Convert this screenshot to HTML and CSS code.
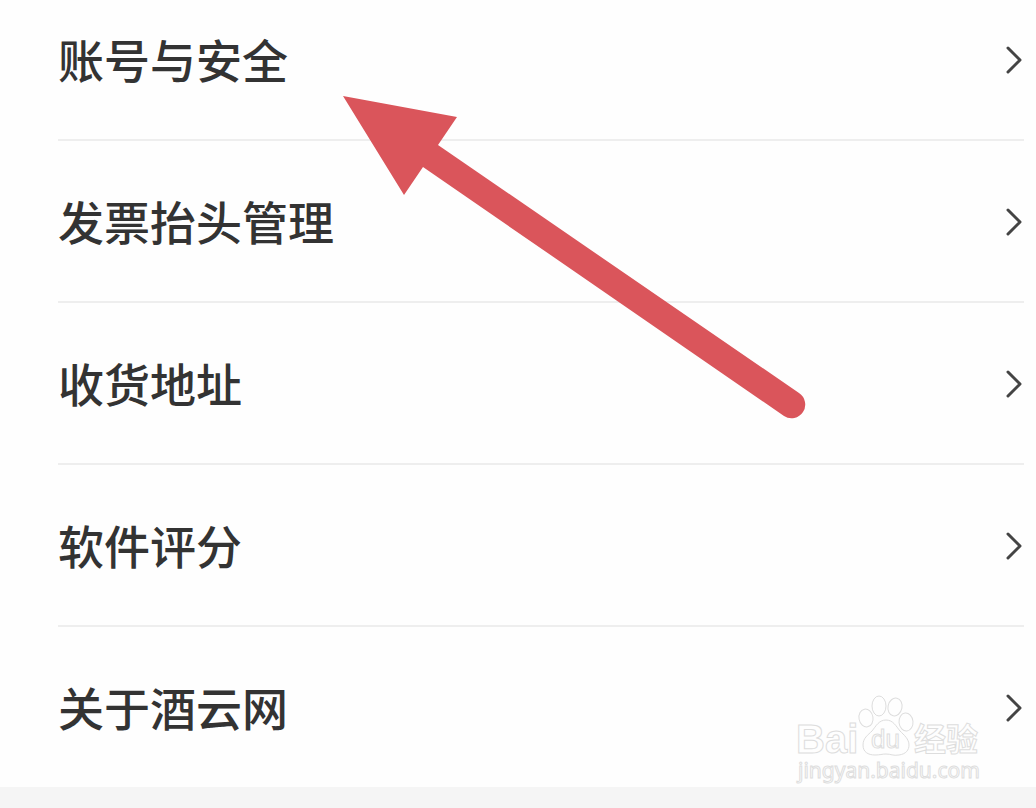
FILE: index.html
```html
<!DOCTYPE html>
<html lang="zh-CN">

<head>
  <meta charset="UTF-8">
  <meta name="viewport" content="width=device-width, initial-scale=1.0">
  <title>设置</title>
  <link rel="stylesheet" href="styles.css">
</head>

<body>
  <main class="page">
    <!-- Settings list -->
    <ul class="settings">
      <li>
        <a class="row" href="#">
          <span class="label">账号与安全</span>
          <svg class="chevron" viewBox="0 0 18 28" aria-hidden="true"><path d="M2 2L14 14L2 26"/></svg>
        </a>
      </li>
      <li>
        <a class="row" href="#">
          <span class="label">发票抬头管理</span>
          <svg class="chevron" viewBox="0 0 18 28" aria-hidden="true"><path d="M2 2L14 14L2 26"/></svg>
        </a>
      </li>
      <li>
        <a class="row" href="#">
          <span class="label">收货地址</span>
          <svg class="chevron" viewBox="0 0 18 28" aria-hidden="true"><path d="M2 2L14 14L2 26"/></svg>
        </a>
      </li>
      <li>
        <a class="row" href="#">
          <span class="label">软件评分</span>
          <svg class="chevron" viewBox="0 0 18 28" aria-hidden="true"><path d="M2 2L14 14L2 26"/></svg>
        </a>
      </li>
      <li>
        <a class="row" href="#">
          <span class="label">关于酒云网</span>
          <svg class="chevron" viewBox="0 0 18 28" aria-hidden="true"><path d="M2 2L14 14L2 26"/></svg>
        </a>
      </li>
    </ul>

    <!-- Arrow pointing at the first row -->
    <svg class="arrow" viewBox="0 0 464 326" aria-hidden="true">
      <path d="M0 0L114 21L95 49L456 297A13.500 13.500 0 0 1 441 320L80 71L61 99Z"/>
    </svg>

    <!-- Watermark -->
    <svg class="watermark" viewBox="0 0 192 92">
      <text class="brand" x="2" y="58">Bai</text>
      <g class="paw">
        <ellipse cx="72" cy="23" rx="7" ry="9" transform="rotate(-10 72 23)"/>
        <ellipse cx="85" cy="11" rx="7" ry="10"/>
        <ellipse cx="101" cy="12" rx="7" ry="9" transform="rotate(12 101 12)"/>
        <ellipse cx="112" cy="27" rx="7" ry="9" transform="rotate(-6 112 27)"/>
        <path d="M92 25C85 25 82 31 78 36C74 40 69 43 69 50C69 57 74 60 81 60C86 60 88 59 92 59C97 59 99 61 105 60C112 59 115 55 115 50C115 44 110 40 106 36C102 31 99 25 92 25Z"/>
      </g>
      <text class="du" x="77" y="53">du</text>
      <text class="product" x="120" y="56">经验</text>
      <text class="site" x="4" y="83">jingyan.baidu.com</text>
    </svg>
  </main>
</body>

</html>
```

FILE: styles.css
```css
body {
  margin: 0;
  background-color: #f5f5f5;
  color: #333;
  font-family: "Noto Sans CJK SC", sans-serif;
}

.page {
  position: relative;
  overflow: hidden;
  background-color: #fefefe;
  margin-bottom: 20px;
}

.settings {
  list-style: none;
  margin: 0;
  padding: 0 12px 0 58px;
}

.settings li {
  border-bottom: 2px solid #eee;
}

.settings li:last-child {
  border-bottom: none;
}

.row {
  display: flex;
  align-items: center;
  justify-content: space-between;
  padding: 52px 0 50px;
  color: #333;
  font-size: 46px;
  font-weight: 500;
  line-height: 54px;
  text-decoration: none;
}

.settings li:first-child .row {
  padding-top: 31px;
}

.label {
  padding-bottom: 4px;
}

.chevron {
  width: 18px;
  height: 28px;
  fill: none;
  stroke: #444;
  stroke-width: 3;
  stroke-linecap: round;
  stroke-linejoin: round;
}

.arrow {
  position: absolute;
  top: 96px;
  left: 343px;
  width: 464px;
  height: 326px;
  fill: #da555b;
}

.watermark {
  position: absolute;
  right: 50px;
  bottom: 0;
  width: 192px;
  height: 92px;
  fill: #fefefe;
  stroke: #ddd;
  stroke-width: 1;
}

.brand {
  font: bold 40px "Liberation Sans", sans-serif;
}

.du {
  font: 26px "Liberation Sans", sans-serif;
}

.product {
  font: bold 32px "Noto Sans CJK SC", sans-serif;
}

.site {
  font: 21px "Noto Sans", sans-serif;
}
```
